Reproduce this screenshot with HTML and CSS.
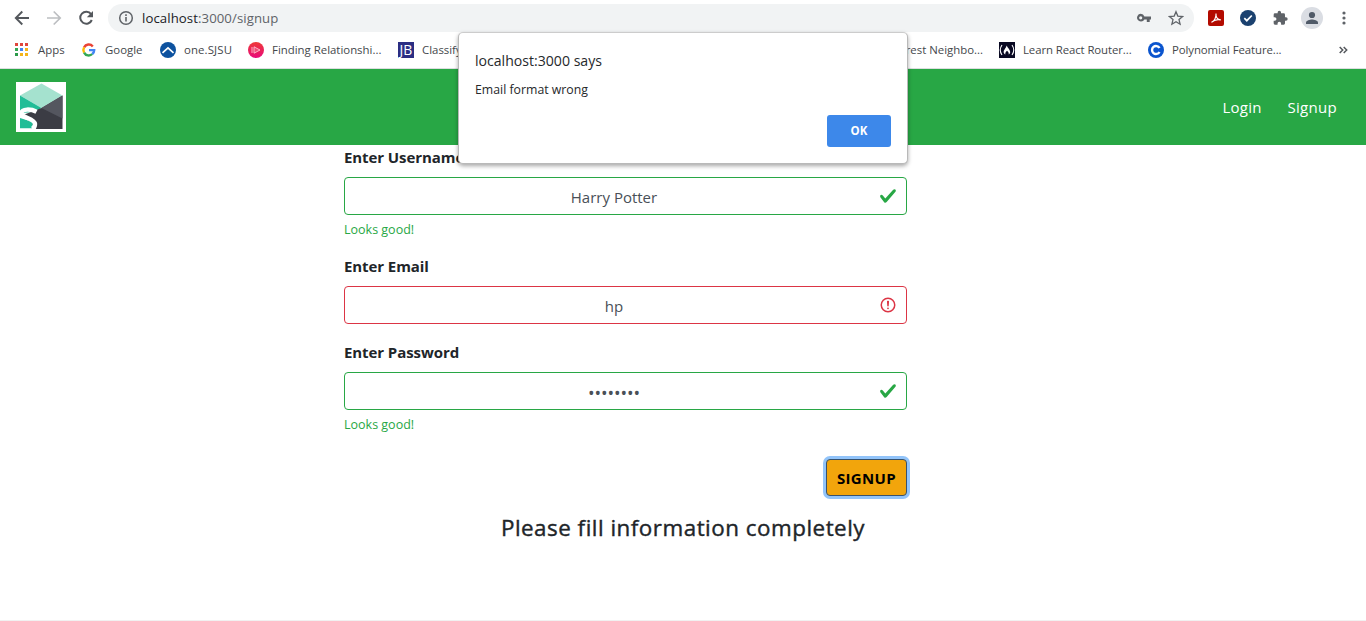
FILE: index.html
```html
<!DOCTYPE html>
<html lang="en">
<head>
<meta charset="utf-8">
<title>Signup</title>
<link rel="stylesheet" href="styles.css">
</head>
<body>
<header class="chrome">
  <div class="toolbar">
    <div class="nav-icons">
      <svg width="16" height="16" viewBox="0 0 16 16" fill="none" stroke="#54585d" stroke-width="1.9"><path d="M15 8H2M8.3 1.5 1.8 8l6.5 6.5"/></svg>
      <svg width="16" height="16" viewBox="0 0 16 16" fill="none" stroke="#bcbec1" stroke-width="1.7"><path d="M1 8h13M7.7 1.5 14.2 8l-6.5 6.5"/></svg>
      <svg width="16" height="16" viewBox="0 0 16 16"><path d="M13.1 4.2A6 6 0 1 0 13.8 10" fill="none" stroke="#54585d" stroke-width="2"/><path d="M15 1v6.2H8.8z" fill="#54585d"/></svg>
    </div>
    <div class="address">
      <svg class="info" width="16" height="16" viewBox="0 0 16 16"><circle cx="8" cy="8" r="6.3" fill="none" stroke="#5f6368" stroke-width="1.5"/><path d="M8 7v4.4M8 4.2v1.7" stroke="#5f6368" stroke-width="1.6"/></svg>
      <span class="url"><b>localhost</b>:3000/signup</span>
      <svg class="key" width="16" height="16" viewBox="0 0 16 16"><path fill-rule="evenodd" d="M4.7 3.8a3.9 3.9 0 0 1 3.7 2.7H15v3h-1.3v2.4h-2.9V9.5H8.4A3.9 3.9 0 1 1 4.7 3.8zm0 2.4a1.6 1.6 0 1 0 0 3.2 1.6 1.6 0 0 0 0-3.2z" fill="#5f6368"/></svg>
      <svg class="star" width="16" height="16" viewBox="0 0 16 16"><path d="m8 1.7 1.8 4.4 4.8.4-3.6 3.1 1.1 4.6L8 11.8l-4.1 2.4L5 9.6 1.4 6.5l4.8-.4z" fill="none" stroke="#5f6368" stroke-width="1.3"/></svg>
    </div>
    <div class="extensions">
      <svg width="16" height="16" viewBox="0 0 16 16"><rect width="16" height="16" rx="2" fill="#b30b00"/><path d="M3.5 12.3c3-1.6 4.6-5.2 4.5-8.8-.3 4 1.6 6.4 4.8 6.4-3.3-.7-6.7-.1-9.3 2.4z" fill="none" stroke="#fff" stroke-width="1.1"/></svg>
      <svg width="16" height="16" viewBox="0 0 16 16"><circle cx="8" cy="8" r="8" fill="#1b416f"/><path d="m4.3 8.2 2.5 2.5 5-5.2" fill="none" stroke="#fff" stroke-width="1.7"/></svg>
      <svg width="16" height="16" viewBox="0 0 24 24"><path d="M21 11h-1.5V7a2 2 0 0 0-2-2h-4V3.500a2.500 2.500 0 0 0-5 0V5h-4a2 2 0 0 0-2 2v3.800H4a2.700 2.700 0 0 1 0 5.400H2.500V20a2 2 0 0 0 2 2h3.800v-1.500a2.700 2.700 0 0 1 5.400 0V22h3.800a2 2 0 0 0 2-2v-4H21a2.500 2.500 0 0 0 0-5z" fill="#5f6368"/></svg>
      <svg width="22" height="22" viewBox="0 0 22 22"><circle cx="11" cy="11" r="11" fill="#dadde3"/><circle cx="11" cy="8" r="3.1" fill="#505a68"/><path d="M5 17v-1.500c0-2 4-3 6-3s6 1 6 3V17z" fill="#505a68"/></svg>
      <svg width="4" height="14" viewBox="0 0 4 14" fill="#5f6368"><circle cx="2" cy="2" r="1.600"/><circle cx="2" cy="7" r="1.600"/><circle cx="2" cy="12" r="1.600"/></svg>
    </div>
  </div>
  <nav class="bookmarks">
    <div class="bookmark">
      <svg width="16" height="16" viewBox="0 0 16 16"><path d="M1 1h3v3H1zM6 1h3v3H6zM11 1h3v3h-3z" fill="#e0463c"/><path d="M1 6h3v3H1z" fill="#34a853"/><path d="M6 6h3v3H6z" fill="#4285f4"/><path d="M11 6h3v3h-3zM11 11h3v3h-3zM6 11h3v3H6z" fill="#f4b41a"/><path d="M1 11h3v3H1z" fill="#2b9a49"/></svg>
      <span>Apps</span>
    </div>
    <div class="bookmark">
      <svg width="16" height="16" viewBox="0 0 16 16" fill="none" stroke-width="2.400"><path d="M3.100 5.400A5.200 5.200 0 0 1 11.800 4.400" stroke="#ea4335"/><path d="M3.100 10.600a5.200 5.200 0 0 1 0-5.200" stroke="#fbbc05"/><path d="M11.300 12a5.200 5.200 0 0 1-8.200-1.400" stroke="#34a853"/><path d="M8 8.100h5.200A5.200 5.200 0 0 1 11.300 12" stroke="#4285f4"/></svg>
      <span>Google</span>
    </div>
    <div class="bookmark">
      <svg width="16" height="16" viewBox="0 0 16 16"><circle cx="8" cy="8" r="8" fill="#0d529f"/><path d="m2.500 10.800 5.500-5 5.500 5" fill="none" stroke="#fff" stroke-width="1.700"/></svg>
      <span class="t-sjsu">one.SJSU</span>
    </div>
    <div class="bookmark">
      <svg width="16" height="16" viewBox="0 0 16 16"><defs><linearGradient id="ps" x1="0" y1="0" x2="0" y2="1"><stop offset="0" stop-color="#ee3a37"/><stop offset="1" stop-color="#e80a7b"/></linearGradient></defs><circle cx="8" cy="8" r="8" fill="url(#ps)"/><path d="M4 5v6M6 4.800v6.400L12 8z" fill="#f99aaf" fill-opacity=".35" stroke="#ffc2d0" stroke-width=".9"/></svg>
      <span>Finding Relationshi...</span>
    </div>
    <div class="bookmark">
      <span class="jb">JB</span>
      <span>Classify</span>
    </div>
    <div class="bookmark neighbor"><span>rest Neighbo...</span></div>
    <div class="bookmark">
      <svg width="16" height="16" viewBox="0 0 16 16"><path d="M0 0h16v16H0z" fill="#0a0a23"/><path d="M3 3Q-.5 8 3 13M13 3q3.500 5 0 10" fill="none" stroke="#fff" stroke-width="1.100"/><path d="M7.600 3.500c1 2.200 3.600 4.300 3.600 6.600 0 1-.6 1.900-1.500 2.300.3-1.600-.6-2.600-1.700-3.600-1 .9-1.900 2-1.700 3.600-2.300-1.300-1.800-3.500-.6-5.200C6.500 6 7.300 5 7.600 3.500z" fill="#fff"/></svg>
      <span class="t-long">Learn React Router...</span>
    </div>
    <div class="bookmark">
      <svg width="16" height="16" viewBox="0 0 16 16"><circle cx="8" cy="8" r="8" fill="#0b55ce"/><path d="M11.500 6A4 4 0 1 0 11.500 10" fill="none" stroke="#fff" stroke-width="2.400"/></svg>
      <span class="t-long">Polynomial Feature...</span>
    </div>
    <svg class="more" width="9" height="8" viewBox="0 0 9 8" fill="none" stroke="#54585d" stroke-width="1.500"><path d="m.700 1 3 3-3 3M4.700 1l3 3-3 3"/></svg>
  </nav>
</header>

<div class="navbar">
  <svg class="logo" width="50" height="50" viewBox="0 0 50 50"><path d="M0 0h50v50H0z" fill="#fff"/><path d="M4 13.500 25.500 1.500 46.500 13.500 25.500 26z" fill="#a5e2cf"/><path d="M4 13.500 25.500 26 19 30 4 31z" fill="#22bd97"/><path d="M46.500 13.500V47H20L7 33l18.500-7z" fill="#3b3c44"/><path d="M46.500 13.500v23L25.500 26z" fill="#54565f"/><path d="M4 36 17 40 16 46.500H4z" fill="#22bd97"/><path d="M20.500 29.800C15 26.800 6 26.500 5.500 31c-.5 5 13 5 13.500 11 .1 2.500-1.200 4-3 4.800" fill="none" stroke="#fff" stroke-width="4.400"/><path d="M2 46.500h18V50H2zM0 24h4v24H0z" fill="#fff"/></svg>
  <nav class="links"><a>Login</a><a>Signup</a></nav>
</div>

<main class="page">
  <form class="form">
    <div class="group valid username">
      <label>Enter Username</label>
      <div class="control"><span>Harry Potter</span><svg class="mark" width="18" height="18" viewBox="0 0 8 8"><path fill="#28a745" d="M2.300 6.730.600 4.530c-.400-1.040.460-1.400 1.100-.800l1.100 1.400 3.400-3.800c.600-.630 1.600-.270 1.200.700l-4 4.600c-.430.500-.800.400-1.100.100z"/></svg></div>
      <p class="feedback">Looks good!</p>
    </div>
    <div class="group invalid email">
      <label>Enter Email</label>
      <div class="control"><span>hp</span><svg class="mark" width="18" height="18" viewBox="0 0 12 12" fill="none" stroke="#dc3545"><circle cx="6" cy="6" r="4.500"/><path stroke-linejoin="round" d="M5.800 3.600h.400L6 6.500z"/><circle cx="6" cy="8.200" r=".6" fill="#dc3545" stroke="none"/></svg></div>
    </div>
    <div class="group valid password">
      <label>Enter Password</label>
      <div class="control"><span class="dots">••••••••</span><svg class="mark" width="18" height="18" viewBox="0 0 8 8"><path fill="#28a745" d="M2.300 6.730.600 4.530c-.400-1.040.460-1.400 1.100-.800l1.100 1.400 3.400-3.800c.600-.630 1.600-.270 1.200.700l-4 4.600c-.430.500-.800.400-1.100.100z"/></svg></div>
      <p class="feedback">Looks good!</p>
    </div>
    <button class="submit" type="button">SIGNUP</button>
  </form>
  <h4 class="message">Please fill information completely</h4>
</main>

<section class="dialog">
  <h1 class="dialog-title">localhost:3000 says</h1>
  <p class="dialog-text">Email format wrong</p>
  <button class="ok" type="button">OK</button>
</section>
</body>
</html>
```
FILE: styles.css
```css
* { box-sizing: border-box; }
html, body { height: 100%; }
body {
  margin: 0;
  height: 621px;
  display: flex;
  flex-direction: column;
  overflow: hidden;
  background: #fff;
  color: #212529;
  font-family: "Open Sans", "Noto Sans", sans-serif;
}
svg { display: block; flex: none; }

.chrome { height: 69px; border-bottom: 1px solid #dcdedf; flex: none; }
.toolbar { height: 36px; display: flex; align-items: center; }
.nav-icons { width: 108px; padding-left: 14px; display: flex; gap: 16px; }
.address {
  width: 1086px;
  height: 28px;
  padding: 0 10px;
  display: flex;
  align-items: center;
  border-radius: 14px;
  background: #f1f3f4;
}
.url { margin-left: 8px; font-size: 13.2px; letter-spacing: .08px; line-height: 20px; color: #5f6368; white-space: nowrap; }
.url b { font-weight: 400; color: #202124; }
.key { margin-left: auto; }
.star { margin-left: 16px; }
.extensions { padding-left: 14px; display: flex; align-items: center; }
.extensions svg + svg { margin-left: 16px; }
.extensions svg:nth-child(4) { margin-left: 13px; }
.extensions svg:nth-child(5) { margin-left: 19px; }

.bookmarks {
  height: 28px;
  padding-left: 14px;
  display: grid;
  grid-template-columns: 67px 79px 88px 150px 300px 301px 149px 191px 1fr;
  align-items: center;
}
.bookmark {
  display: flex;
  align-items: center;
  gap: 8px;
  font-size: 11.4px;
  line-height: 18px;
  color: #44474b;
  white-space: nowrap;
}
.neighbor { justify-content: flex-end; padding-right: 16px; }
.t-sjsu { letter-spacing: .13px; }
.t-long { letter-spacing: -.09px; }
.jb {
  width: 16px;
  height: 16px;
  background: #2b2e83;
  color: #fff;
  font: 400 14px/16px "Open Sans", sans-serif;
  text-align: center;
}

.navbar {
  flex: none;
  height: 76px;
  padding: 0 29px 0 16px;
  display: flex;
  align-items: center;
  justify-content: space-between;
  background: #28a745;
}
.links { display: flex; gap: 25.6px; color: #fff; font-size: 15px; letter-spacing: .3px; line-height: 24px; }

.page { flex: 1; border-bottom: 1px solid #f1f1f1; }
.form { width: 563px; margin-left: 344px; display: flex; flex-direction: column; }
.group { display: flex; flex-direction: column; align-items: stretch; }
.username { height: 109px; }
.email { height: 86px; }
.password { height: 119px; }
.group label { height: 24px; margin-bottom: 8px; font-size: 15px; letter-spacing: -.08px; line-height: 24px; font-weight: 700; white-space: nowrap; }
.control {
  height: 38px;
  padding: 1px 9px 0 4px;
  display: flex;
  align-items: center;
  border: 1px solid #28a745;
  border-radius: 4px;
  color: #495057;
  font-size: 15px;
  line-height: 24px;
}
.control span { flex: 1; text-align: center; }
.invalid .control { border-color: #dc3545; }
.mark { margin-top: -1px; }
.control .dots { padding-top: 2px; font-size: 17.5px; letter-spacing: -.1px; }
.feedback { margin: 5px 0 0; color: #28a745; font-size: 12.5px; line-height: 20px; }
.submit {
  align-self: flex-end;
  width: 81px;
  height: 37px;
  padding: 0;
  border: 1px solid #37526e;
  border-radius: 4px;
  background: #f2a50c;
  box-shadow: 0 0 0 3px #92c4fa;
  color: #000;
  font: 700 15px/24px "Open Sans", sans-serif;
  letter-spacing: .35px;
}
.message {
  margin: 17px 0 0;
  text-align: center;
  font-size: 22.4px;
  letter-spacing: .5px;
  line-height: 29px;
  font-weight: 400;
  -webkit-text-stroke: .4px #212529;
}

.dialog {
  position: absolute;
  left: 458px;
  top: 32px;
  width: 450px;
  height: 132px;
  padding: 18px 16px 16px;
  display: flex;
  flex-direction: column;
  border: 1px solid #b9b9b9;
  border-top-color: #ccc;
  border-radius: 5px;
  background: #fff;
  box-shadow: 0 2px 4px rgba(0, 0, 0, .35);
  color: #26282b;
}
.dialog-title { margin: 0; font-size: 14.1px; line-height: 20px; font-weight: 400; }
.dialog-text { margin: 9px 0 0; font-size: 12.3px; line-height: 20px; }
.ok {
  margin-top: auto;
  align-self: flex-end;
  width: 64px;
  height: 32px;
  padding: 0;
  border: 0;
  border-radius: 3px;
  background: #3d88ea;
  color: #fff;
  font: 700 11.500px/18px "Open Sans", sans-serif;
}
```
